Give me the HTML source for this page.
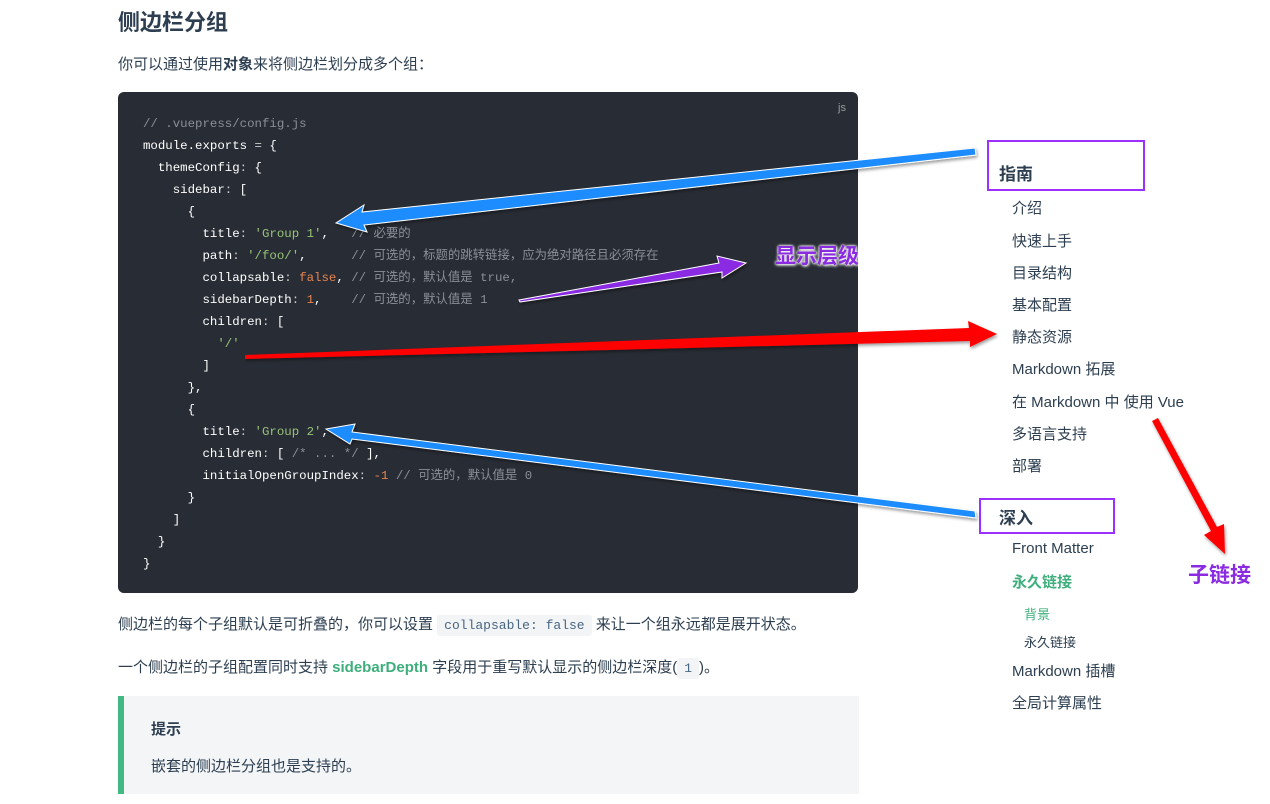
<!DOCTYPE html>
<html><head><meta charset="utf-8"><style>
body{margin:0;width:1270px;height:804px;overflow:hidden;background:#fff;font-family:"Liberation Sans","Noto Sans CJK SC",sans-serif;color:#2c3e50;position:relative}
.a{position:absolute;white-space:nowrap}
h2{position:absolute;left:118px;top:5px;margin:0;font-size:22px;font-weight:bold;color:#2c3e50}
.code{position:absolute;left:118px;top:92px;width:740px;height:501px;background:#282c34;border-radius:6px}
.code pre{margin:0;position:absolute;left:25px;top:21px;font-family:"Liberation Mono","Noto Sans CJK SC",monospace;font-size:12.4px;line-height:22px;color:#fff}
.c{color:#8a8f98}.s{color:#98c379}.n{color:#e8844f}.p{color:#ccc}
.js{position:absolute;right:12px;top:10px;font-size:11px;color:#999;font-family:"Liberation Sans",sans-serif}
code.i{font-family:"Liberation Mono",monospace;font-size:13px;background:#f3f4f5;padding:3px 7px;border-radius:3px;color:#476582}
.sb{font-size:15px;color:#2c3e50}
.lbl{font-weight:bold;font-size:21px;color:#8a2be2;text-shadow:0 0 2px #fff,0 0 3px #fff,1px 1px 3px #fff;font-family:"Liberation Sans","Noto Sans CJK SC",sans-serif}
</style></head><body>
<h2>侧边栏分组</h2>
<div class="a" style="left:118px;top:53px;font-size:15px">你可以通过使用<b>对象</b>来将侧边栏划分成多个组：</div>
<div class="code"><span class="js">js</span><pre><span class="c">// .vuepress/config.js</span>
module.exports <span class="p">=</span> {
  themeConfig<span class="p">:</span> {
    sidebar<span class="p">:</span> [
      {
        title<span class="p">:</span> <span class="s">'Group 1'</span>,   <span class="c">// 必要的</span>
        path<span class="p">:</span> <span class="s">'/foo/'</span>,      <span class="c">// 可选的，标题的跳转链接，应为绝对路径且必须存在</span>
        collapsable<span class="p">:</span> <span class="n">false</span>, <span class="c">// 可选的，默认值是 true,</span>
        sidebarDepth<span class="p">:</span> <span class="n">1</span>,    <span class="c">// 可选的，默认值是 1</span>
        children<span class="p">:</span> [
          <span class="s">'/'</span>
        ]
      },
      {
        title<span class="p">:</span> <span class="s">'Group 2'</span>,
        children<span class="p">:</span> [ <span class="c">/* ... */</span> ],
        initialOpenGroupIndex<span class="p">:</span> <span class="n">-1</span> <span class="c">// 可选的，默认值是 0</span>
      }
    ]
  }
}</pre></div>
<div class="a" style="left:118px;top:613px;font-size:15px">侧边栏的每个子组默认是可折叠的，你可以设置 <code class="i">collapsable: false</code> 来让一个组永远都是展开状态。</div>
<div class="a" style="left:118px;top:656px;font-size:15px">一个侧边栏的子组配置同时支持 <b style="color:#3eaf7c">sidebarDepth</b> 字段用于重写默认显示的侧边栏深度(<code class="i">1</code>)。</div>
<div class="a" style="left:118px;top:696px;width:741px;height:98px;background:#f3f5f7;border-left:6px solid #42b983;box-sizing:border-box">
<div class="a" style="left:27px;top:22px;font-size:15px;font-weight:bold">提示</div>
<div class="a" style="left:27px;top:59px;font-size:15px">嵌套的侧边栏分组也是支持的。</div></div>

<div class="a" style="left:987px;top:140px;width:158px;height:51px;border:2px solid #9b30ff;box-sizing:border-box"></div>
<div class="a" style="left:999px;top:160px;font-size:17px;font-weight:bold">指南</div>
<div class="a sb" style="left:1012px;top:197px">介绍</div>
<div class="a sb" style="left:1012px;top:230px">快速上手</div>
<div class="a sb" style="left:1012px;top:262px">目录结构</div>
<div class="a sb" style="left:1012px;top:294px">基本配置</div>
<div class="a sb" style="left:1012px;top:326px">静态资源</div>
<div class="a sb" style="left:1012px;top:358px">Markdown 拓展</div>
<div class="a sb" style="left:1012px;top:391px">在 Markdown 中 使用 Vue</div>
<div class="a sb" style="left:1012px;top:423px">多语言支持</div>
<div class="a sb" style="left:1012px;top:455px">部署</div>
<div class="a" style="left:979px;top:498px;width:136px;height:36px;border:2px solid #9b30ff;box-sizing:border-box"></div>
<div class="a" style="left:999px;top:504px;font-size:17px;font-weight:bold">深入</div>
<div class="a sb" style="left:1012px;top:540px">Front Matter</div>
<div class="a sb" style="left:1012px;top:571px;color:#3eaf7c;font-weight:bold">永久链接</div>
<div class="a" style="left:1024px;top:604px;font-size:13px;color:#3eaf7c">背景</div>
<div class="a" style="left:1024px;top:632px;font-size:13px">永久链接</div>
<div class="a sb" style="left:1012px;top:660px">Markdown 插槽</div>
<div class="a sb" style="left:1012px;top:692px">全局计算属性</div>

<div class="a lbl" style="left:775px;top:240px">显示层级</div>
<div class="a lbl" style="left:1188px;top:559px">子链接</div>

<svg class="a" style="left:0;top:0" width="1270" height="804">
<defs><filter id="sh"><feDropShadow dx="1" dy="2" stdDeviation="1.5" flood-opacity=".4"/></filter></defs>
<g filter="url(#sh)" stroke="#fff" stroke-width="1">
<polygon points="975,148 362,212 364,205 336,223 367,232 364,225 976,155" fill="#1a8cff"/>
<polygon points="975,511 352,432 355,424 326,429 350,444 352,439 976,518" fill="#1a8cff"/>
<polygon points="520,302 722,272 722,278 746,263 717,256 719,263 519,300" fill="#8a2be2"/>
<polygon points="245,359 970,341 970,347 997,334 968,321 969,328 245,355" fill="#f00" stroke="none"/>
<polygon points="1152,421 1211,531 1204,535 1225,554 1224,524 1217,527 1158,418" fill="#f00" stroke="none"/>
</g></svg>
</body></html>
